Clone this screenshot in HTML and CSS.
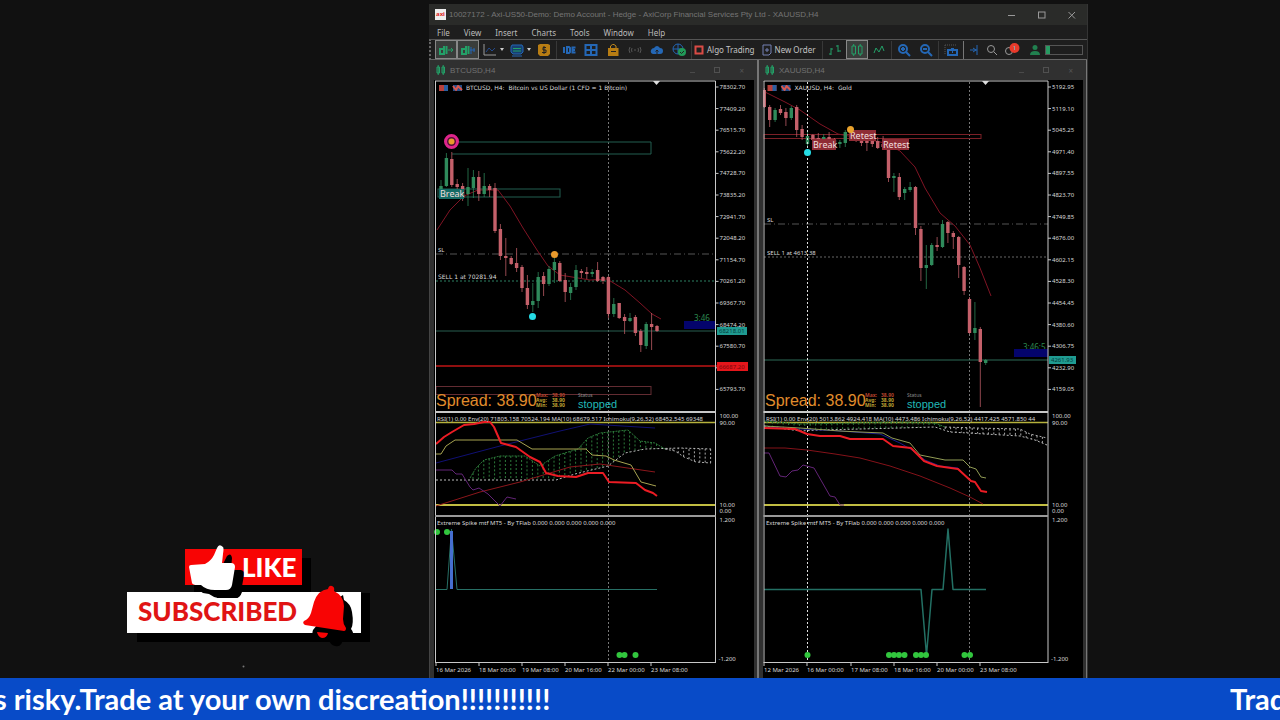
FILE: index.html
```html
<!DOCTYPE html>
<html lang="en">
<head>
<meta charset="utf-8">
<title>Live trading stream</title>
<link rel="stylesheet" href="styles.css">
</head>
<body>
<main class="scene">
  <section class="promo">
    <svg class="sticker" viewBox="120 540 260 132" role="img" aria-label="Like and subscribed">
      <path fill="#000" d="M194 558h117v35h59v49h-233v-41h57z"/>
      <rect x="185" y="549" width="117" height="36" fill="#f80404"/>
      <rect x="127" y="592" width="234" height="41" fill="#fff"/>
      <path fill="#000" d="M194 585H302V592H242q-2 6-6 6l-18 0q-5-1-9-4l-6-1q-5-3-9-8z"/>
      <path fill="#000" d="M222 566l5-10q4-4 5 2l-1 12h10q4 1 3 5l-3 17q-1 6-6 6h-18z"/>
      <path fill="#fff" d="M191 565q-2 0-2 2l3 16q1 2 5 2h4q5 5 14 5l11 0q5 0 6-5l3-18q0-4-4-4h-9l1-9q1-6 0-7q-4-4-6 1l-3 7q-3 6-9 9z"/>
      <path fill="#000" d="M340 597l3-2 1 5q7 4 8 12q2 12-1 17q3 3 2 9l-10 0q-1 10-8 8q-5-1-6-7l-14-2q-4-2-2-7z"/>
      <path fill="#f80404" d="M328 589q1-4 4-3q3 1 2 5q10 5 10 15l-1 13q0 5 3 9q0 3-2 3l-39-6q-3-2-1-4q5-2 7-8l3-11q4-12 14-13zM317 632l11 1q-1 5-6 5q-4-1-5-6z"/>
      <text x="242" y="577" class="sticker-like">LIKE</text>
      <text x="138" y="621" class="sticker-sub">SUBSCRIBED</text>
      <circle cx="243.500" cy="666.500" r="1" fill="#777"/>
    </svg>
  </section>

  <section class="app">
    <header class="titlebar">
      <span class="logo">axi</span>
      <h1 class="app-title">10027172 - Axi-US50-Demo: Demo Account - Hedge - AxiCorp Financial Services Pty Ltd - XAUUSD,H4</h1>
      <div class="win-controls">
        <button aria-label="Minimize"><svg viewBox="0 0 10 10"><path d="M1 5.500h7"/></svg></button>
        <button aria-label="Maximize"><svg viewBox="0 0 10 10"><rect x="1.500" y="2" width="6.500" height="6"/></svg></button>
        <button aria-label="Close"><svg viewBox="0 0 10 10"><path d="M1.500 2l6.500 6.500M8 2L1.500 8.500"/></svg></button>
      </div>
    </header>
    <nav class="menubar">
      <button>File</button><button>View</button><button>Insert</button><button>Charts</button><button>Tools</button><button>Window</button><button>Help</button>
    </nav>
    <div class="toolbar">
      <button class="tool on" aria-label="Auto scroll"><svg viewBox="0 0 16 14"><path class="g2" d="M6 3v8H2V6h4M8.500 3v8"/><path class="g" d="M10 7h5M13 5l2 2-2 2"/></svg></button>
      <button class="tool on" aria-label="Chart shift"><svg viewBox="0 0 16 14"><path class="g2" d="M6 3v8H2V6h4M8.500 3v8"/><path class="b" d="M10 7h5M11 4v7M14 5v4"/></svg></button>
      <button class="tool wide" aria-label="Indicators"><svg viewBox="0 0 16 14"><path class="w" d="M2 1v11h12"/><path class="n" d="M4 9l3-4 3 3 3-3"/></svg><i class="caret"></i></button>
      <button class="tool wide" aria-label="Templates"><svg viewBox="0 0 16 14"><path class="bd" d="M3 2h10l1 2v5l-2 2H4L2 9V4z"/><path class="b" d="M3 13h10"/><path class="g" d="M4 5.500h8M4 8h8"/></svg><i class="caret"></i></button>
      <button class="tool" aria-label="Market"><svg viewBox="0 0 16 14"><path class="of" d="M2 2l2-1h8l2 1v9l-2 2H4l-2-2z"/><path class="k" d="M10 4.500H7v2.500h3V9.500H6M8 3v8"/></svg></button>
      <span class="sep"></span>
      <button class="tool" aria-label="IDE"><svg viewBox="0 0 16 14"><path class="b2" d="M3 4v6M6 4v6h2l1-1V5L8 4zM14.500 4.500h-3v5h3M11 7h3"/></svg></button>
      <button class="tool" aria-label="Market watch"><svg viewBox="0 0 16 14"><path class="b2" d="M2.500 2h11v10h-11zM8 2v10M2.500 7h11"/></svg></button>
      <button class="tool" aria-label="Shop"><svg viewBox="0 0 16 14"><path class="o" d="M5.500 5V3l2-1.500h1.500l2 1.500v2"/><path class="of" d="M3 5h10.500v8H3z"/><path class="k" d="M6 8.500h5"/></svg></button>
      <button class="tool" aria-label="Signals"><svg viewBox="0 0 16 14"><path class="d" d="M3 4q-2 3 0 6M5 5q-1 2 0 4M13 4q2 3 0 6M11 5q1 2 0 4M8 6v2"/></svg></button>
      <button class="tool" aria-label="VPS"><svg viewBox="0 0 16 14"><path class="bf" d="M4 11q-3-1-2-4q1-2 3-2q3-4 6 0q3 0 3 3q0 3-3 3z"/><path class="k" d="M8 11V7M6.500 8.500L8 7l1.500 1.500"/></svg></button>
      <button class="tool" aria-label="Community"><svg viewBox="0 0 16 14"><circle class="b" cx="7" cy="6" r="5"/><path class="b" d="M2 6h10M7 1v10"/><circle cx="11" cy="9" r="4" fill="#219a58"/><path class="k" d="M9 9l1.500 1.500L13 8"/></svg></button>
      <span class="sep"></span>
      <button class="tool label"><svg viewBox="0 0 12 14"><rect class="r" x="2.500" y="3.500" width="7" height="7"/></svg>Algo Trading</button>
      <button class="tool label"><svg viewBox="0 0 12 14"><path class="v" d="M2 2h8v8l-2 2H2zM4 7h4M6 5v4"/></svg>New Order</button>
      <span class="sep"></span>
      <button class="tool" aria-label="Bars"><svg viewBox="0 0 16 14"><path class="g" d="M4 5v7M4 6h2M2 11h2M11 2v7M9 3h2M11 8h3"/></svg></button>
      <button class="tool on" aria-label="Candles" aria-pressed="true"><svg viewBox="0 0 16 14"><path class="g" d="M3 3h3.500v8H3zM9.500 3H13v8H9.500zM4.700 1v2M4.700 11v2M11.200 1v2M11.200 11v2"/></svg></button>
      <button class="tool" aria-label="Line"><svg viewBox="0 0 16 14"><path class="g" d="M3 10l2-5 3 4 3-6 2 5"/></svg></button>
      <span class="sep"></span>
      <button class="tool" aria-label="Zoom in"><svg viewBox="0 0 16 14"><circle class="b2" cx="7" cy="6" r="4"/><path class="b2" d="M10 9l4 4M5 6h4M7 4v4"/></svg></button>
      <button class="tool" aria-label="Zoom out"><svg viewBox="0 0 16 14"><circle class="b2" cx="7" cy="6" r="4"/><path class="b2" d="M10 9l4 4M5 6h4"/></svg></button>
      <span class="sep"></span>
      <button class="tool" aria-label="Screenshot"><svg viewBox="0 0 16 14"><path class="d" d="M2 2v9M2 2h11" stroke-dasharray="1 1"/><path class="b2" d="M5 7h9v5H5zM8 6h3M9 9h1"/></svg></button>
      <span class="sep bright"></span>
      <button class="tool slim" aria-label="Shift"><svg viewBox="0 0 12 14"><path class="b" d="M9 2v10M2 7h7M5 5l3 2-3 2"/></svg></button>
      <button class="tool slim" aria-label="Search"><svg viewBox="0 0 12 14"><circle class="w" cx="5" cy="6" r="3.500"/><path class="w" d="M8 9l3 3"/></svg></button>
      <button class="tool" aria-label="Notifications, 1 new"><svg viewBox="0 0 16 14"><circle class="w" cx="5" cy="8" r="3.500"/><circle cx="10.500" cy="5" r="5" fill="#e83a2b"/><path class="w" d="M9.500 4l1-1v4"/></svg></button>
      <button class="tool" aria-label="Account"><svg viewBox="0 0 16 14"><circle cx="9" cy="4.500" r="2.500" fill="#21804f"/><path fill="#21804f" d="M4 12q0-4 5-4t5 4z"/></svg></button>
      <span class="meter"><i></i></span>
    </div>
    <div class="workspace">
      <article class="chart-window">
        <header class="chart-title"><svg viewBox="0 0 10 10"><path d="M1 2h2.500v6H1zM6 2h2.500v6H6zM2.200 0v10M7.200 0v10"/></svg><h2>BTCUSD,H4</h2><span class="child-controls"><i class="min"></i><i class="box"></i><i class="cross">×</i></span></header>
        <svg class="chart" id="btc" viewBox="434 80 320 598" preserveAspectRatio="xMinYMin slice" role="img" aria-label="BTCUSD four hour chart"></svg>
      </article>
      <article class="chart-window">
        <header class="chart-title"><svg viewBox="0 0 10 10"><path d="M1 2h2.500v6H1zM6 2h2.500v6H6zM2.200 0v10M7.200 0v10"/></svg><h2>XAUUSD,H4</h2><span class="child-controls"><i class="min"></i><i class="box"></i><i class="cross">×</i></span></header>
        <svg class="chart" id="xau" viewBox="763 80 320 598" preserveAspectRatio="xMinYMin slice" role="img" aria-label="XAUUSD four hour chart"></svg>
      </article>
    </div>
  </section>
</main>
<footer class="ticker"><span class="ticker-main">s risky.Trade at your own discreation!!!!!!!!!!!</span><span class="ticker-next">Trade</span></footer>
<script src="charts.js"></script>
</body>
</html>
```
FILE: styles.css
```css
* { box-sizing: border-box; }
body {
  margin: 0;
  height: 100vh;
  display: flex;
  flex-direction: column;
  overflow: hidden;
  background: #111;
  color: #bbb;
  font-family: "Noto Sans", sans-serif;
  font-size: 8px;
}
button {
  padding: 0;
  border: 0;
  background: none;
  color: inherit;
  font: inherit;
}
h1, h2 { margin: 0; font: inherit; }

.scene {
  flex: 1;
  min-height: 0;
  display: grid;
  grid-template-columns: 429fr 659fr 192fr;
  grid-template-rows: minmax(0, 1fr);
}
.promo {
  display: flex;
  align-items: flex-end;
  justify-content: center;
  padding: 0 49px 6px 120px;
}
.sticker { width: 100%; }
.sticker-like, .sticker-sub { font-family: Lato, sans-serif; font-weight: 900; font-size: 26px; }
.sticker-like { fill: #fff; }
.sticker-sub { fill: #e01414; }

.app {
  display: flex;
  flex-direction: column;
  min-width: 0;
  margin-top: 4px;
  background: #1e1e1e;
  border-right: 1px solid #343434;
}
.titlebar {
  display: flex;
  align-items: center;
  height: 21px;
  padding: 0 6px;
  gap: 3px;
  background: #2a2b29;
  color: #757575;
}
.logo {
  width: 11px;
  height: 11px;
  background: #eee;
  color: #d22;
  font-size: 6px;
  line-height: 10px;
  font-weight: 700;
  text-align: center;
}
.app-title {
  flex: 1;
  font-family: "Liberation Sans", sans-serif;
  white-space: nowrap;
  overflow: hidden;
}
.win-controls { display: flex; gap: 20px; padding-right: 4px; }
.win-controls button { display: flex; }
.win-controls svg { width: 10px; height: 10px; fill: none; stroke: #999; }
.menubar {
  display: flex;
  gap: 14px;
  height: 14px;
  padding: 0 8px;
  line-height: 13px;
}
.toolbar {
  display: flex;
  align-items: center;
  height: 21px;
  padding: 0 4px;
  border-top: 1px solid #555;
  border-bottom: 1px solid #666;
  border-left: 2px dotted #666;
  overflow: hidden;
}
.tool {
  flex: none;
  display: flex;
  align-items: center;
  justify-content: center;
  width: 22px;
  height: 19px;
}
.tool svg { flex: none; width: 16px; height: 14px; fill: none; }
.tool.on { background: #3a3d3b; border: 1px solid #888; }
.tool.wide { width: 27px; gap: 2px; }
.tool.slim { width: 18px; }
.tool.label { width: auto; gap: 2px; margin-right: 6px; color: #c4c4c4; white-space: nowrap; }
.tool.label svg, .tool.slim svg { width: 12px; }
.caret {
  border: 2px solid transparent;
  border-top: 3px solid #ccc;
  border-bottom: 0;
}
.sep { flex: none; width: 1px; height: 18px; margin: 0 1px; background: #383838; }
.sep.bright { background: #777; }
.meter {
  flex: 1;
  height: 10px;
  border: 1px solid #555;
}
.meter i { display: block; width: 4px; height: 8px; background: #279b62; }
.g { stroke: #23a168; }
.g2 { stroke: #23a168; stroke-width: 2; }
.b { stroke: #2467b5; }
.b2 { stroke: #2467b5; stroke-width: 2; }
.bd { stroke: #2467b5; fill: #173f70; }
.bf { fill: #2467b5; }
.n { stroke: #244a8c; }
.w { stroke: #999; }
.v { stroke: #7581b5; }
.o { stroke: #c18a1d; }
.of { fill: #b87d13; }
.k { stroke: #222; }
.d { stroke: #555; }
.r { stroke: #d94b45; stroke-width: 2; }

.workspace {
  flex: 1;
  min-height: 0;
  display: grid;
  grid-template-columns: 1fr 1fr;
  grid-template-rows: minmax(0, 1fr);
}
.chart-window {
  display: flex;
  flex-direction: column;
  min-width: 0;
  padding: 0 3px 0 4px;
  background: #303030;
  border-left: 1px solid #777;
  border-right: 1px solid #777;
}
.chart-window:first-child { border-left-color: #444; }
.chart-title {
  display: flex;
  align-items: center;
  gap: 4px;
  height: 20px;
  padding: 0 10px 0 2px;
  color: #707070;
}
.chart-title svg { width: 10px; height: 10px; fill: none; stroke: #23a168; }
.chart-title h2 { font-family: "Liberation Sans", sans-serif; }
.child-controls { display: flex; align-items: center; gap: 19px; margin-left: auto; color: #555; }
.min { width: 5px; height: 6px; border-bottom: 1px solid #4a4a4a; }
.box { width: 6px; height: 6px; border: 1px solid #505050; }
.cross { font-style: normal; }
.chart { flex: 1; min-height: 0; width: 100%; background: #000; }
.chart text { font-size: 6px; fill: #d8d8d8; }
.chart .heading { font-family: "DejaVu Sans", sans-serif; }
.chart .spread { font-family: "Liberation Sans", sans-serif; font-size: 16px; fill: #e08c2c; }
.chart .stopped { font-family: "Liberation Sans", sans-serif; font-size: 11px; fill: #20b8b8; }
.chart .timer { font-size: 8px; fill: #2d8a50; }
.chart .tag { font-size: 9px; fill: #f0dede; }
.chart .small { font-size: 5px; fill: #888; }
.chart .hot { font-size: 5px; fill: #b5432c; font-weight: 700; }
.chart .warm { font-size: 5px; fill: #bda032; font-weight: 700; }
.chart .on-teal { fill: #063c3c; }
.chart .on-red { fill: #7c080b; }

.ticker {
  display: flex;
  justify-content: space-between;
  height: 42px;
  line-height: 42px;
  overflow: hidden;
  background: #084bc8;
  color: #fff;
  font-family: Lato, sans-serif;
  font-size: 29px;
  font-weight: 700;
  white-space: nowrap;
}
.ticker-main { margin-left: -6px; }
.ticker-next { width: 50px; }
```
FILE: charts.js
```js
const UP = '#2f8a5b', DOWN = '#c4606a', WHITE = '#c8c8c8';
const line = (x1, y1, x2, y2, c, extra = '') => `<path d="M${x1} ${y1}L${x2} ${y2}" stroke="${c}" fill="none" ${extra}/>`;
const poly = (pts, c, w = 1, extra = '') => `<polyline points="${pts}" stroke="${c}" stroke-width="${w}" fill="none" stroke-linejoin="round" ${extra}/>`;
const rect = (x, y, w, h, fill, stroke = 'none') => `<rect x="${x}" y="${y}" width="${w}" height="${h}" fill="${fill}" stroke="${stroke}"/>`;
const text = (x, y, s, cls = '') => `<text x="${x}" y="${y}" class="${cls}">${s}</text>`;
const dot = (x, y, r, c) => `<circle cx="${x}" cy="${y}" r="${r}" fill="${c}"/>`;

// Each candle: wick top, body top, body bottom, wick bottom, 1 = rising
function candles(x0, data) {
  return data.map(([a, b, c, d, up], i) => {
    const x = x0 + i * 5.4, col = up ? UP : DOWN;
    return line(x, a, x, d, col, 'opacity=".75"') + rect(x - 1.7, b, 3.4, c - b, col);
  }).join('');
}

// Height of a polyline at x
function at(pts, x) {
  for (let i = 1; i < pts.length; i++) {
    const [x1, y1] = pts[i - 1], [x2, y2] = pts[i];
    if (x <= x2) return y1 + (y2 - y1) * (x - x1) / (x2 - x1);
  }
  return pts[pts.length - 1][1];
}
function cloud(upper, lower, from, to, split) {
  let s = '';
  for (let x = from; x < to; x += 5.4) {
    s += line(x, at(upper, x), x, at(lower, x), x < split ? '#2c7a3a' : '#aaa', 'stroke-dasharray="2 2"');
  }
  const half = p => p.filter(([x]) => x <= split).join(' ');
  return s + poly(half(upper), '#2c7a3a', 1, 'stroke-dasharray="2 1"') +
    poly(upper.filter(([x]) => x >= split).join(' '), '#aaa', 1, 'stroke-dasharray="2 2"') +
    poly(lower.join(' '), '#bbb', 1, 'stroke-dasharray="2 2"');
}

function frame(o) {
  const { left: l, right: r } = o;
  let s = line(l, 81, r, 81, WHITE) + line(l + .5, 81, l + .5, 662, WHITE) + line(r, 81, r, 663, WHITE) +
    line(l, 412, r, 412, WHITE, 'stroke-width="2"') + line(l, 516, r, 516, '#999', 'stroke-width="2"') + line(l, 662.5, r, 662.5, WHITE);
  o.prices.forEach((p, i) => {
    const y = 87 + i * 21.6;
    s += line(r, y, r + 3, y, WHITE) + text(r + 4, y + 2, p);
  });
  s += text(r + 4, 418, '100.00') + text(r + 4, 425, '90.00') + text(r + 4, 507, '10.00') + text(r + 4, 513, '0.00') +
    text(r + 4, 522, '1.200') + text(r + 3, 661, '-1.200');
  o.dates.forEach(([x, d]) => { s += line(x, 662, x, 666, WHITE) + text(x, 672, d); });
  s += `<path d="M${o.marker - 3} 81h7l-3.500 4z" fill="#ddd"/>`;
  s += rect(l + 4, 85, 9, 6, '#b9403b') + rect(l + 9, 85, 4, 6, '#2a5fa0') + rect(l + 18, 85, 9, 6, '#244f8a') +
    poly(`${l + 18},86 ${l + 21},90 ${l + 23},86 ${l + 27},90`, '#d95850', 2);
  return s + text(l + 31, 90, o.title, 'heading');
}
function footer(l) {
  let s = text(l + 1, 406, 'Spread: 38.90', 'spread');
  [397, 402, 407].forEach((y, i) => {
    const c = i ? 'warm' : 'hot';
    s += text(l + 101, y, ['Max:', 'Avg:', 'Min:'][i], c) + text(l + 117, y, '38.90', c);
  });
  return s + text(l + 143, 397, 'Status', 'small') + text(l + 143, 408, 'stopped', 'stopped');
}
const bands = (l, r) => line(l, 422.5, r, 422.5, '#b5b13c', 'stroke-width="1.500"') + line(l, 505, r, 505, '#c2bd42', 'stroke-width="2"');
const session = (x, c) => line(x, 82, x, 662, c, 'stroke-dasharray="2 2"');

const btcUpper = [[470,478],[476,468],[484,460],[500,456],[525,456],[540,466],[555,456],[578,449],[588,438],[600,433],[628,430],[640,441],[655,443],[665,449],[675,451],[684,457],[696,462],[711,463]];
const btcLower = [[436,480],[556,480],[575,474],[608,466],[625,453],[645,449],[680,448],[711,449]];
document.getElementById('btc').innerHTML =
  session(608.5, '#777') +
  poly('452,142 651,142 651,154 452,154', '#225e51') + rect(438, 189, 122, 8, 'none', '#225e51') +
  line(436, 254, 715, 254, '#555', 'stroke-dasharray="7 3 1 3"') + line(436, 281, 715, 281, '#2c8062', 'stroke-dasharray="2 2"') +
  line(436, 331, 715, 331, '#285f50') + line(435, 366, 718, 366, '#c01515', 'stroke-width="1.500"') + rect(436, 386.5, 215, 8, 'none', '#632c32') +
  poly('437,230 450,210 464,196 478,190 498,190 510,206 523,228 537,250 548,266 560,275 590,280 607,279 625,290 640,303 652,314 661,319', '#801424') +
  candles(441, [[180,186,196,198,1],[153,158,186,187,1],[152,159,185,187,0],[179,184,187,190,0],[183,186,198,201,0],[168,187,194,206,1],[170,177,188,198,1],[171,177,194,201,0],[173,186,194,197,1],[184,186,190,197,0],[183,188,231,233,0],[224,229,256,260,0],[238,256,258,276,0],[256,258,264,265,0],[248,263,268,272,0],[265,267,288,292,0],[275,288,305,309,0],[283,301,305,312,1],[272,277,301,308,1],[272,276,284,296,0],[266,269,284,286,1],[257,262,270,283,1],[261,263,281,282,0],[273,280,292,302,0],[283,287,293,300,1],[265,270,287,290,1],[269,271,273,278,0],[267,272,274,279,0],[269,272,274,277,1],[262,270,281,282,0],[276,277,281,284,0],[276,277,314,318,0],[298,304,314,317,1],[303,303,318,319,0],[314,317,321,334,0],[313,318,321,322,1],[315,317,333,336,0],[329,331,345,352,0],[322,324,346,349,1],[313,324,327,350,0],[325,326,331,332,0]]) +
  '<circle cx="451.500" cy="141.500" r="6" fill="#541238" stroke="#df258c" stroke-width="3"/>' + dot(451.5, 141.5, 3, '#e99a2c') +
  dot(554.5, 254.5, 3.5, '#e99a2c') + dot(532.5, 316.5, 3.5, '#25dce5') +
  rect(439, 189, 25, 10, '#146b65') + text(440, 197, 'Break', 'tag') +
  text(438, 252, 'SL') + text(438, 279, 'SELL 1 at 70281.94', 'heading') +
  text(694, 321, '3:46', 'timer') + rect(684, 321, 31, 8, '#04046c') +
  bands(436, 715) + cloud(btcUpper, btcLower, 473, 712, 665) +
  poly('436,463 500,446 560,431 590,424 655,428', '#101074') +
  poly('436,506 480,492 520,482 570,467 600,464 655,472', '#8c171c') +
  poly('436,470 452,470 456,474 462,474 470,487 473,490 479,488 488,494 500,506 507,497 516,499', '#632477') +
  poly('436,454 441,454 446,446 455,440 517,440 532,449 586,449 592,455 606,456 614,460 631,465 641,482 656,486', '#a7a351') +
  poly('436,444 444,437 452,432 464,425 474,424 484,422 490,422 494,427 501,443 516,447 530,457 540,462 546,473 558,476 576,477 588,473 603,473 609,482 636,483 645,490 653,493 657,496', '#ec1c24', 2) +
  text(437, 421, 'RSI(1) 0.00 Env(20) 71805.158 70524.194 MA(10) 68679.517 Ichimoku(9,26,52) 68452.545 69348') +
  text(437, 525, 'Extreme Spike mtf MT5 - By TFlab 0.000 0.000 0.000 0.000 0.000') +
  poly('436,589.5 447,589.5 451.500,529 457,589.5 657,589.5', '#276f65') + line(451.5, 531, 451.5, 589, '#466fd0', 'stroke-width="3"') +
  [[437,532],[447,532],[619.5,655],[624.5,655],[635.5,655]].map(([x, y]) => dot(x, y, 3, '#32c63e')).join('') +
  frame({ left: 435, right: 715.5, marker: 656, title: 'BTCUSD, H4:&#160; Bitcoin vs US Dollar (1 CFD = 1 Bitcoin)',
    prices: ['78302.70','77409.20','76515.70','75622.20','74728.70','73835.20','72941.70','72048.20','71154.70','70261.20','69367.70','68474.20','67580.70','66687.20','65793.70'],
    dates: [[436,'16 Mar 2026'],[479,'18 Mar 00:00'],[522,'19 Mar 08:00'],[565,'20 Mar 16:00'],[608,'22 Mar 00:00'],[651,'23 Mar 08:00']] }) +
  footer(435) + rect(717, 327, 30, 8, '#1f9b91') + text(719, 333, '68218.01', 'on-teal') + rect(717, 362, 31, 9, '#e5161b') + text(719, 369, '66687.20', 'on-red');

const xauUpper = [[764,421],[800,424],[850,423],[900,422],[935,423],[945,427],[975,428],[1020,429],[1030,434],[1047,438]];
const xauLower = [[764,426],[800,431],[820,430],[900,428],[935,427],[950,432],[1020,436],[1035,440],[1047,445]];
document.getElementById('xau').innerHTML =
  session(969.5, '#777') +
  rect(764, 134.5, 217, 4, 'none', '#7b2027') +
  line(764, 224, 1048, 224, '#555', 'stroke-dasharray="7 3 1 3"') + line(764, 257, 1048, 257, '#666', 'stroke-dasharray="2 2"') + line(764, 360, 1048, 360, '#2d6a57') +
  poly('765,92 785,102 800,110 820,124 838,134 870,140 885,143 900,151 915,167 925,188 940,213 955,226 970,245 980,268 991,296', '#801424') +
  candles(764.3, [[88,90,107,108,0],[105,107,120,127,0],[108,110,120,122,1],[105,109,113,115,0],[108,112,118,126,0],[106,108,118,120,1],[105,107,130,137,0],[125,129,137,140,0],[132,136,144,148,1],[134,135,140,143,0],[133,138,142,146,0],[134,137,142,147,1],[132,137,143,150,0],[138,140,145,148,0],[140,142,144,148,1],[130,132,143,147,1],[128,131,134,137,1],[131,133,136,142,0],[134,136,143,146,0],[134,137,143,151,0],[136,138,144,147,0],[137,141,148,149,0],[136,144,147,149,0],[148,150,178,182,0],[173,176,178,192,1],[173,177,197,200,0],[187,189,193,200,1],[182,187,190,192,1],[186,187,228,235,0],[226,229,268,281,0],[245,265,268,289,1],[243,245,265,266,1],[237,245,247,251,0],[220,224,247,248,1],[221,222,233,243,0],[231,233,237,249,0],[236,237,265,278,0],[266,267,291,295,0],[297,299,333,334,0],[302,328,333,340,1],[327,329,362,407,0],[359,360,363,365,1]]) +
  session(807.5, '#e0e0e0') + dot(807.5, 152.5, 3.5, '#25dce5') +
  [[812,139,'Break',24],[849,130,'Retest',27],[882,139,'Retest',27]].map(([x, y, t, w]) => rect(x, y, w, 11, '#8f2c35') + text(x + 1, y + 9, t, 'tag')).join('') +
  dot(850.5, 129.5, 3.5, '#e9a22c') +
  text(767, 222, 'SL') + text(767, 255, 'SELL 1 at 4613.38') +
  text(1023, 350, '3:46:5', 'timer') + rect(1014, 349, 34, 8, '#04046c') +
  bands(764, 1048) + cloud(xauUpper, xauLower, 767, 1047, 945) +
  poly('764,448 785,448 807,450 835,454 860,458 890,466 920,476 950,488 970,497 983,504', '#841219') +
  poly('764,453 769,453 780,476 786,477 792,471 798,470 803,465 814,468 830,496 835,497 840,505 844,505', '#632477') +
  poly('764,427 800,429 840,431 880,434 900,443 912,450 925,460 940,466 958,468 970,480', '#17178c') +
  poly('764,426 800,428 840,431 860,432 883,433 892,438 910,443 920,455 935,458 945,460 963,460 970,467 976,469 981,477 986,478', '#919c55') +
  poly('764,428 795,429 807,434 820,436 840,436 850,439 883,439 893,446 911,448 924,461 937,466 958,469 971,481 975,482 981,491 987,492', '#ec1c24', 2) +
  text(766, 421, 'RSI(1) 0.00 Env(20) 5013.862 4924.418 MA(10) 4473.486 Ichimoku(9,26,52) 4417.425 4571.850 44') +
  text(766, 525, 'Extreme Spike mtf MT5 - By TFlab 0.000 0.000 0.000 0.000 0.000') +
  poly('764,589.5 921,589.5 926.5,655 932,589.5 943,589.5 948,529 953,589.5 986,589.5', '#237064', 1.5) +
  [807.5,889,894,899,904.5,916,921,926,964.5,970].map(x => dot(x, 655, 3, '#32c63e')).join('') +
  frame({ left: 763.5, right: 1048, marker: 985, title: 'XAUUSD, H4:&#160; Gold',
    prices: ['5192.95','5119.10','5045.25','4971.40','4897.55','4823.70','4749.85','4676.00','4602.15','4528.30','4454.45','4380.60','4306.75','4232.90','4159.05'],
    dates: [[764,'12 Mar 2026'],[807,'16 Mar 00:00'],[851,'17 Mar 08:00'],[894,'18 Mar 16:00'],[937,'20 Mar 00:00'],[980,'23 Mar 08:00']] }) +
  footer(764) + rect(1049, 356, 27, 8, '#1f9b91') + text(1051, 362, '4261.93', 'on-teal');
```
